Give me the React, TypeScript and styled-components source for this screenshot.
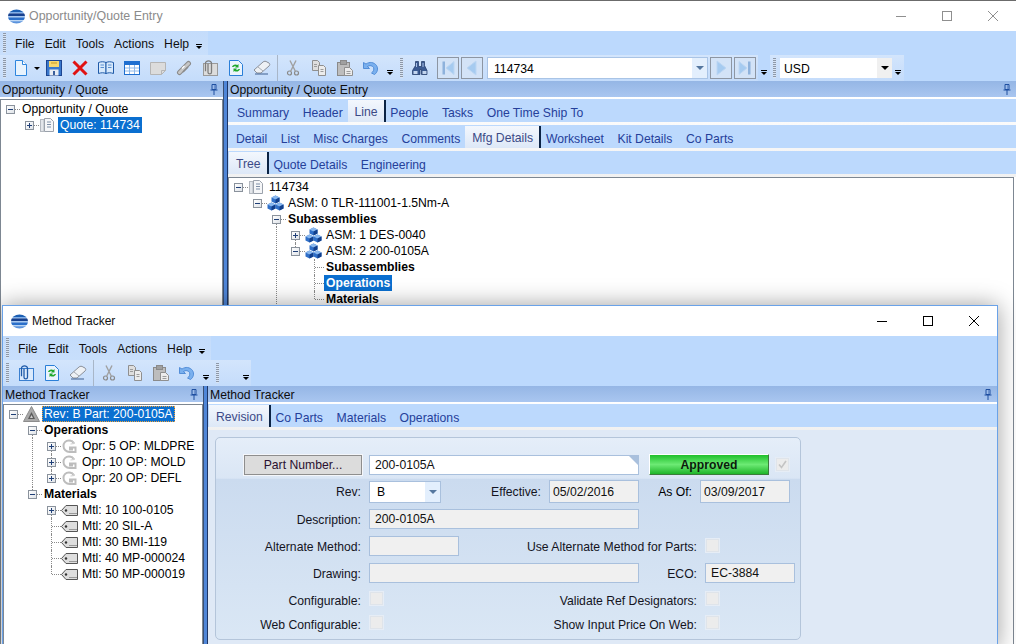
import React from "react";
import styled, { createGlobalStyle } from "styled-components";

const Global = createGlobalStyle`
  html, body {
    margin: 0;
    padding: 0;
    background: #f0f0f0;
  }
  * {
    box-sizing: border-box;
  }
`;

const UI_FONT = `"Liberation Sans", Arial, sans-serif`;

const Desktop = styled.div`
  position: relative;
  width: 1016px;
  height: 644px;
  overflow: hidden;
  font-family: ${UI_FONT};
  font-size: 12.2px;
  color: #000;
`;

const BackWindow = styled.div`
  position: absolute;
  top: 0;
  left: 0;
  width: 1016px;
  height: 644px;
  display: flex;
  flex-direction: column;
  background: #fff;
  border-top: 1px solid #6b6b6b;
`;

const FrontWindow = styled.div`
  position: absolute;
  top: 305px;
  left: 2px;
  width: 996px;
  height: 345px;
  display: flex;
  flex-direction: column;
  background: #fff;
  border: 1px solid #6aa2e8;
  box-shadow: 0 0 22px rgba(0, 0, 0, 0.38);
`;

const TitleBar = styled.div`
  flex: none;
  height: 30px;
  display: flex;
  align-items: center;
  padding-left: 8px;
  background: #fff;
`;

const TitleText = styled.div<{ $active?: boolean }>`
  flex: 1;
  margin-left: 4px;
  font-size: ${(p) => (p.$active ? "12px" : "12.4px")};
  color: ${(p) => (p.$active ? "#111" : "#8b8b8b")};
`;

const WinButton = styled.div`
  width: 46px;
  height: 30px;
  display: flex;
  align-items: center;
  justify-content: center;
`;

const MenuBand = styled.div`
  flex: none;
  height: 24px;
  background: #bcd9fd;
  display: flex;
`;

const MenuStrip = styled.div`
  display: flex;
  align-items: center;
  width: 208px;
  padding-left: 3px;
  background: linear-gradient(180deg, #c4dcfb, #c8dffc);
`;

const Grip = styled.div`
  flex: none;
  width: 3px;
  height: 20px;
  background: repeating-linear-gradient(180deg, #8d98a8 0 1px, #d8e4f4 1px 2px);
`;

const MenuItem = styled.div<{ $first?: boolean }>`
  margin-left: ${(p) => (p.$first ? "9px" : "10px")};
  padding-top: 2px;
  color: #101010;
`;

const Overflow = styled.div<{ $gap?: number }>`
  flex: none;
  align-self: flex-end;
  width: 6px;
  height: 6px;
  margin: 0 0 5px ${(p) => p.$gap ?? 7}px;
  background: linear-gradient(#000, #000) top / 6px 1px no-repeat;
  position: relative;
  &::after {
    content: "";
    position: absolute;
    left: 0;
    top: 2px;
    border: 3px solid transparent;
    border-top-color: #000;
    border-bottom: 0;
  }
`;

const ToolBand = styled.div`
  flex: none;
  height: 26px;
  background: #bcd9fd;
  display: flex;
`;

const ToolStrip = styled.div<{ $width: number; $gap?: number }>`
  flex: none;
  width: ${(p) => p.$width}px;
  margin-left: ${(p) => p.$gap ?? 0}px;
  padding-left: 3px;
  display: flex;
  align-items: center;
  background: linear-gradient(180deg, #d3e5fc, #c4dcfb);
`;

const ToolButton = styled.div<{ $width?: number; $left?: number }>`
  flex: none;
  width: ${(p) => p.$width ?? 26}px;
  height: 22px;
  margin-left: ${(p) => p.$left ?? 0}px;
  display: flex;
  align-items: center;
  justify-content: center;
`;

const SplitCaret = styled.div`
  flex: none;
  width: 9px;
  display: flex;
  justify-content: center;
  &::after {
    content: "";
    border: 3px solid transparent;
    border-top-color: #000;
    border-bottom: 0;
  }
`;

const ToolSep = styled.div`
  flex: none;
  width: 1px;
  height: 26px;
  margin: 0 2px;
  background: #a8b6c8;
`;

const NavButton = styled.div<{ $left?: number }>`
  flex: none;
  width: 22px;
  height: 22px;
  margin-left: ${(p) => p.$left ?? 2}px;
  border: 1px solid #8d96a3;
  background: #d3e3f7;
  display: flex;
  align-items: center;
  justify-content: center;
`;

const ToolCombo = styled.div<{ $width: number; $left: number; $plain?: boolean }>`
  flex: none;
  width: ${(p) => p.$width}px;
  height: ${(p) => (p.$plain ? 20 : 22)}px;
  margin-left: ${(p) => p.$left}px;
  display: flex;
  align-items: center;
  background: #fff;
  border: ${(p) => (p.$plain ? "0" : "1px solid #a9c4e6")};
  padding-left: ${(p) => (p.$plain ? 4 : 6)}px;
`;

const ComboText = styled.div`
  flex: 1;
  padding-top: 1px;
`;

const ComboDrop = styled.div<{ $plain?: boolean; $width?: number }>`
  flex: none;
  width: ${(p) => p.$width ?? 15}px;
  height: 100%;
  background: ${(p) => (p.$plain ? "#f0f0f0" : "#e3effd")};
  display: flex;
  align-items: center;
  justify-content: center;
  &::after {
    content: "";
    border: 4px solid transparent;
    border-top-color: ${(p) => (p.$plain ? "#000" : "#55779f")};
    border-bottom: 0;
  }
`;

const DockBody = styled.div`
  flex: 1;
  min-height: 0;
  display: flex;
`;

const Dock = styled.div<{ $width?: number }>`
  ${(p) => (p.$width ? `flex: none; width: ${p.$width}px;` : "flex: 1; min-width: 0;")}
  display: flex;
  flex-direction: column;
`;

const Splitter = styled.div`
  flex: none;
  width: 5px;
  background: #4f86d8;
  border-left: 1px solid #3a4f72;
  border-right: 1px solid #1d3566;
`;

const DockHeader = styled.div`
  flex: none;
  height: 16px;
  display: flex;
  align-items: center;
  justify-content: space-between;
  padding: 1px 5px 0 2px;
  background: linear-gradient(180deg, #95b6e5, #a9c6f0);
  color: #0d0d0d;
`;

const TreePane = styled.div<{ $right?: number; $flush?: boolean }>`
  flex: 1;
  min-height: 0;
  overflow: hidden;
  margin: ${(p) => (p.$flush ? 0 : 2)}px ${(p) => p.$right ?? 0}px 0 0;
  padding-top: 1px;
  background: #fff;
  border: 1px solid #7d8792;
  border-bottom: 0;
`;

const TabStack = styled.div`
  flex: none;
  display: flex;
  flex-direction: column;
  gap: 3px;
  padding-top: 2px;
  padding-bottom: 3px;
  background: linear-gradient(#fff, #f1f1f1);
`;

const TabStrip = styled.div<{ $pad?: number }>`
  height: 23px;
  display: flex;
  padding-left: ${(p) => p.$pad ?? 3}px;
  background: #bcd9fd;
`;

const Tab = styled.div<{ $active?: boolean }>`
  display: flex;
  align-items: center;
  white-space: nowrap;
  ${(p) =>
    p.$active
      ? `
    padding: 2px 6px 1px 7px;
    margin: 1px -2px 0 -2px;
    background: linear-gradient(180deg, #f3f7fd, #dde8f7);
    border-right: 2px solid #0b2344;
    color: #3c4a86;
  `
      : `
    padding: 5px 6.8px 0;
    color: #25409a;
  `}
`;

const FormArea = styled.div`
  flex: 1;
  min-height: 0;
  padding: 7px 0 0 7px;
  background: #dfe9f6;
`;

const GroupPanel = styled.div`
  width: 586px;
  height: 203px;
  padding-top: 13px;
  border: 1px solid #b4c5da;
  border-radius: 5px;
  background: linear-gradient(180deg, #e5eef9 0, #dae6f5 20%, #cbdbef 20.5%, #dae7f5 100%);
  display: grid;
  grid-template-columns: 145px 8px 90px 90px 90px 10px 48px 8px 90px;
  grid-template-rows: 27px 27px 27px 27px 27px 25px 22px;
  align-items: center;
`;

const FieldLabel = styled.div<{ $col: string; $pad?: number; $drop?: number }>`
  grid-column: ${(p) => p.$col};
  padding-top: ${(p) => p.$drop ?? 1}px;
  padding-right: ${(p) => p.$pad ?? 0}px;
  text-align: right;
  white-space: nowrap;
  color: #14141e;
`;

const Field = styled.div<{ $col: string; $editable?: boolean }>`
  grid-column: ${(p) => p.$col};
  position: relative;
  height: 20px;
  display: flex;
  align-items: center;
  padding-left: 5px;
  border: 1px solid #a9c0dd;
  background: ${(p) => (p.$editable ? "#fff" : "#f0f0f0")};
  color: #111;
`;

const Notch = styled.div`
  position: absolute;
  top: 0;
  right: 0;
  border-style: solid;
  border-width: 0 9px 9px 0;
  border-color: transparent #a9c0dd transparent transparent;
`;

const RevCombo = styled.div`
  grid-column: 3;
  width: 72px;
  height: 22px;
  display: flex;
  align-items: center;
  padding-left: 7px;
  border: 1px solid #a9c0dd;
  background: #fff;
`;

const PartButton = styled.div`
  grid-column: 1;
  margin-left: 28px;
  width: 118px;
  height: 20px;
  display: flex;
  align-items: center;
  justify-content: center;
  background: #dcdcdc;
  border: 1px solid #8e8e8e;
  outline: 1px solid #f4f6fa;
  color: #2a1030;
`;

const StatusGroup = styled.div`
  grid-column: 7 / 10;
  display: flex;
  align-items: center;
`;

const StatusButton = styled.div`
  flex: none;
  width: 120px;
  height: 21px;
  display: flex;
  align-items: center;
  justify-content: center;
  font-weight: 700;
  color: #0c1a0c;
  background: linear-gradient(180deg, #1fc02b, #6cea74 50%, #1fb52a);
  border-top: 1px solid #fff;
  border-left: 1px solid #fff;
  border-right: 1px solid #3c7a3c;
  border-bottom: 1px solid #3c7a3c;
`;

const AsOfPair = styled.div`
  grid-column: 7 / 10;
  display: flex;
  align-items: center;
  justify-content: flex-end;
  gap: 8px;
  margin-right: 5px;
`;

const DateField = styled.div<{ $col?: string }>`
  ${(p) => (p.$col ? `grid-column: ${p.$col};` : "")}
  width: 90px;
  height: 23px;
  display: flex;
  align-items: center;
  padding: 1px 0 0 3px;
  border: 1px solid #a9c0dd;
  background: #f0f0f0;
  color: #111;
`;

const CheckBox = styled.div<{ $col?: string; $left?: number }>`
  ${(p) => (p.$col ? `grid-column: ${p.$col};` : "")}
  flex: none;
  width: 13px;
  height: 13px;
  margin-left: ${(p) => p.$left ?? 1}px;
  background: #ececec;
  border: 1px solid #dfe4ea;
  outline: 1px solid #e6edf6;
  display: flex;
  align-items: center;
  justify-content: center;
`;

/* tree */
const Row = styled.div`
  height: 16px;
  display: flex;
  align-items: center;
  white-space: nowrap;
`;

const Guide = styled.div<{ $line?: boolean }>`
  flex: none;
  width: 19px;
  height: 16px;
  background: ${(p) =>
    p.$line
      ? "repeating-linear-gradient(180deg, #8a8a8a 0 1px, transparent 1px 2px) 9px 0 / 1px 16px no-repeat"
      : "none"};
`;

const Slot = styled.div<{ $up?: boolean; $down?: boolean }>`
  flex: none;
  position: relative;
  width: 19px;
  height: 16px;
  display: flex;
  align-items: center;
  justify-content: center;
  &::before {
    content: "";
    position: absolute;
    left: 9px;
    top: ${(p) => (p.$up ? "0" : "8px")};
    bottom: ${(p) => (p.$down ? "0" : "8px")};
    border-left: 1px dotted #8a8a8a;
  }
  &::after {
    content: "";
    position: absolute;
    left: 10px;
    right: 0;
    top: 8px;
    border-top: 1px dotted #8a8a8a;
  }
`;

const Expander = styled.div`
  position: relative;
  z-index: 1;
  width: 9px;
  height: 9px;
  background: linear-gradient(135deg, #fff, #dfe3e8);
  border: 1px solid #8a929c;
  display: flex;
  align-items: center;
  justify-content: center;
  svg {
    display: block;
  }
`;

const NodeIcon = styled.div`
  flex: none;
  width: 17px;
  height: 16px;
  display: flex;
  align-items: center;
  justify-content: center;
`;

const NodeLabel = styled.div<{ $bold?: boolean; $selected?: boolean; $focus?: boolean; $offset?: number }>`
  height: 16px;
  line-height: 17px;
  margin-left: ${(p) => p.$offset ?? 0}px;
  padding: 0 2px;
  font-weight: ${(p) => (p.$bold ? 700 : 400)};
  background: ${(p) => (p.$selected ? "#0a6fd0" : "transparent")};
  color: ${(p) => (p.$selected ? "#fff" : "#000")};
  outline: ${(p) => (p.$focus ? "1px dotted #f2a33a" : "none")};
  outline-offset: -1px;
`;

/* ---------- drawings ---------- */
const Svg = ({ w = 16, h = 16, children }: { w?: number; h?: number; children: React.ReactNode }) => (
  <svg width={w} height={h} viewBox={`0 0 ${w} ${h}`} fill="none">
    {children}
  </svg>
);

const AppLogo = () => (
  <svg width="17" height="15" viewBox="0 0 17 15">
    <defs>
      <clipPath id="logo">
        <ellipse cx="8.5" cy="7.5" rx="8.5" ry="7" />
      </clipPath>
    </defs>
    <g clipPath="url(#logo)">
      <rect width="17" height="3" fill="#1c5fb4" />
      <rect y="3" width="17" height="1.4" fill="#7fb0ea" />
      <rect y="4.4" width="17" height="2.6" fill="#16408e" />
      <rect y="7" width="17" height="1.4" fill="#a9c9ef" />
      <rect y="8.4" width="17" height="2.6" fill="#2a6fca" />
      <rect y="11" width="17" height="1.2" fill="#bcd6f3" />
      <rect y="12.2" width="17" height="3" fill="#5a93dd" />
    </g>
  </svg>
);

const MinGlyph = ({ color }: { color: string }) => (
  <Svg w={10} h={10}>
    <path d="M0 5.5h10" stroke={color} />
  </Svg>
);
const MaxGlyph = ({ color }: { color: string }) => (
  <Svg w={10} h={10}>
    <rect x=".5" y=".5" width="9" height="9" stroke={color} />
  </Svg>
);
const CloseGlyph = ({ color }: { color: string }) => (
  <Svg w={10} h={10}>
    <path d="M0 0l10 10M10 0L0 10" stroke={color} />
  </Svg>
);

const NewDoc = () => (
  <Svg>
    <path d="M2.5 .5h7l4 4v11h-11z" fill="#e8f3fd" stroke="#2e86de" />
    <path d="M9.5 .5v4h4" fill="#fff" stroke="#2e86de" />
  </Svg>
);
const Save = () => (
  <Svg>
    <rect x=".5" y=".5" width="15" height="15" fill="#3a78cc" stroke="#1d4590" />
    <rect x="3" y="1" width="10" height="6" fill="#f8d86e" />
    <path d="M5 3h6" stroke="#c79a26" />
    <rect x="3.5" y="9.5" width="9" height="6" fill="#e8edf4" />
    <rect x="7" y="11" width="2" height="4" fill="#3a5f9c" />
  </Svg>
);
const RedX = () => (
  <Svg>
    <path d="M1.5 1.5l13 13M14.5 1.5l-13 13" stroke="#e01212" strokeWidth="3" />
  </Svg>
);
const Book = () => (
  <Svg>
    <path d="M.5 2.5c3-1 5-1 7.500 0v11c-2.500-1-4.500-1-7.500 0z" fill="#d7e9fb" stroke="#1f5aa8" />
    <path d="M15.500 2.500c-3-1-5-1-7.500 0v11c2.500-1 4.500-1 7.500 0z" fill="#d7e9fb" stroke="#1f5aa8" />
    <path d="M2.500 5h3.500M2.500 7.500h3.500M10 5h3.500M10 7.500h3.500" stroke="#5a8fd0" />
  </Svg>
);
const Calendar = () => (
  <Svg>
    <rect x=".5" y="1.500" width="15" height="13" fill="#fff" stroke="#1f6fd0" />
    <rect x="1" y="2" width="14" height="3" fill="#1f6fd0" />
    <path d="M1 8h14M1 11h14M5.500 5v9M10.500 5v9" stroke="#8db8ea" />
  </Svg>
);
const Note = () => (
  <Svg>
    <path d="M.5 2.500h15v8l-4 4h-11z" fill="#dcdcdc" stroke="#b5b5b5" />
    <path d="M15.500 10.500h-4v4" stroke="#b5b5b5" />
  </Svg>
);
const Phone = () => (
  <Svg>
    <path d="M3.500 12.500L12.500 3.500" stroke="#8a8a8a" strokeWidth="5" strokeLinecap="round" />
    <path d="M3.500 12.500L12.500 3.500" stroke="#c6c6c6" strokeWidth="3" strokeLinecap="round" />
    <path d="M6 8.500L8.500 6" stroke="#fff" strokeWidth="1.200" />
    <path d="M7 12l5-5" stroke="#8a8a8a" strokeWidth="1.600" />
  </Svg>
);
const ClipDoc = ({ blue }: { blue?: boolean }) => (
  <Svg>
    <rect x="1.500" y="3.500" width="14" height="12" fill={blue ? "#dbeafc" : "#dcdcdc"} stroke={blue ? "#3a7fd0" : "#9a9a9a"} />
    <path
      d="M4.500 3.500v8.500c0 2.200 3.500 2.200 3.500 0v-9c0-3-6-3-6 0v8"
      stroke={blue ? "#1f5aa8" : "#7d7d7d"}
      strokeWidth="1.300"
      transform="translate(1.500 .2)"
    />
  </Svg>
);
const RefreshDoc = () => (
  <Svg>
    <path d="M1.500 .5h9l4 4v11h-13z" fill="#eaf3fd" stroke="#2a7fd8" />
    <path d="M4 7c.5-2 3-3.500 5.500-2l1-1v3.500h-3.500l1-1c-1-.500-2-.500-2.500.500z" fill="#1fa82c" />
    <path d="M12 9c-.5 2-3 3.500-5.500 2l-1 1V8.500H9l-1 1c1 .5 2 .5 2.500-.5z" fill="#1fa82c" />
  </Svg>
);
const Eraser = () => (
  <svg width="18" height="16" viewBox="0 0 18 16" fill="none">
    <path d="M1 10l9-8c1-1 3-1 4 0l2 1c1 1 1 2 0 3l-8 7H4z" fill="#eef1f5" stroke="#8a8f98" />
    <path d="M2 14h13" stroke="#3f5f8f" />
    <path d="M5 7l5 4" stroke="#a5aab2" />
  </svg>
);
const Scissors = () => (
  <Svg>
    <circle cx="4.500" cy="13" r="2" stroke="#8a8a8a" strokeWidth="1.200" />
    <circle cx="11.500" cy="13" r="2" stroke="#8a8a8a" strokeWidth="1.200" />
    <path d="M5.500 11.500L11 .5M10.500 11.500L5 .5" stroke="#a0a0a0" strokeWidth="1.400" />
  </Svg>
);
const Copy = () => (
  <Svg>
    <path d="M1.500 .5h5l2 2v8h-7z" fill="#dedede" stroke="#8f8f8f" />
    <path d="M7.500 5.500h5l2 2v8h-7z" fill="#ececec" stroke="#8f8f8f" />
    <path d="M9.500 9.500h3M9.500 11.500h3M3 4.500h3M3 6.500h3" stroke="#9c9c9c" />
  </Svg>
);
const Paste = () => (
  <Svg>
    <rect x=".5" y="2.500" width="12" height="13" fill="#bdbdbd" stroke="#8a8a8a" />
    <rect x="3.500" y=".5" width="6" height="4" fill="#a0a0a0" stroke="#8a8a8a" />
    <path d="M7.500 7.500h5l3 3v5h-8z" fill="#ececec" stroke="#8f8f8f" />
    <path d="M9.500 11.500h4M9.500 13.500h4" stroke="#9c9c9c" />
  </Svg>
);
const Undo = () => (
  <Svg>
    <path d="M.5 2.500v6h6L4.500 6.500c2-1.500 5-1 6 1 .8 2 0 4-2 5.500l3 1.500c3-2 4-6 2-9-2.500-3.500-7-4-10.500-1.500z" fill="#7ab0ee" stroke="#3f7fd0" strokeWidth=".8" />
  </Svg>
);
const Binoculars = () => (
  <Svg>
    <path d="M3.500 1.500h3v5h3v-5h3v4l2.500 5v4h-5.500v-5h-1.500v5H.5v-4l3-5z" fill="#3a5a92" stroke="#1d3563" strokeWidth=".7" />
    <path d="M4.500 3v4M11 3v4" stroke="#a9c0e6" />
    <rect x="1.500" y="11" width="4" height="3" fill="#c3d5ee" />
    <rect x="10.500" y="11" width="4" height="3" fill="#c3d5ee" />
  </Svg>
);
const NavArrow = ({ dir, bar }: { dir: "left" | "right"; bar?: boolean }) => (
  <Svg>
    <g transform={dir === "left" ? "matrix(-1 0 0 1 16 0)" : undefined}>
      <path d={bar ? "M2 1.500v13l8-6.500z" : "M4 1l9 7-9 7z"} fill="#a6cbf0" stroke="#bcd6f3" />
      {bar && <rect x="11" y="1.500" width="2.500" height="13" fill="#8eb2dc" />}
    </g>
  </Svg>
);

const QuoteNode = () => (
  <Svg w={17} h={16}>
    <rect x="1.500" y="2.500" width="3.500" height="12" fill="#e2e5ea" stroke="#b3b8bf" />
    <path d="M5.500 1.500h6l3 3v10h-9z" fill="#f5f6f8" stroke="#9ba2ac" />
    <path d="M8 5h4M8 7.500h4M8 10h4" stroke="#7d8ea6" />
  </Svg>
);
const Cube = ({ x, y }: { x: number; y: number }) => (
  <g transform={`translate(${x} ${y})`}>
    <path d="M4 0l4 2v4L4 8 0 6V2z" fill="#2f6fc8" />
    <path d="M4 0l4 2-4 2-4-2z" fill="#8ab8ee" />
    <path d="M4 4l4-2v4L4 8z" fill="#123f8c" />
  </g>
);
const AsmNode = () => (
  <Svg w={17} h={16}>
    <Cube x={4.500} y={0.500} />
    <Cube x={0.500} y={7.500} />
    <Cube x={8.500} y={7.500} />
  </Svg>
);
const RevNode = () => (
  <Svg w={17} h={16}>
    <path d="M8.500 .5l8 15h-16z" fill="#a9a9a9" stroke="#8c8c8c" />
    <path d="M8.500 6l3.500 7h-7z" fill="#5c5c5c" />
    <path d="M8.500 9l1.500 3h-3z" fill="#cfcfcf" />
  </Svg>
);
const OprNode = () => (
  <Svg w={17} h={16}>
    <path d="M13 5.500c-1-2-3-3-5-3-3.500 0-5.500 2.800-5.500 5.500 0 3.500 2.800 6 6 6h6V9.500H9v2h3" stroke="#bdbdbd" strokeWidth="2" />
    <path d="M11 2l2.500 3.500L9.500 6" stroke="#d0d0d0" strokeWidth="1" />
  </Svg>
);
const MtlNode = () => (
  <Svg w={17} h={16}>
    <path d="M5 3.500h11.500v10H5L.5 8.500z" fill="#dedede" stroke="#555" />
    <circle cx="5" cy="8.500" r="1.200" fill="#333" />
    <path d="M8 11.500h8" stroke="#9a9a9a" />
  </Svg>
);

const Pin = () => (
  <svg width="8" height="11" viewBox="0 0 8 11" fill="none">
    <path d="M2 .5h4v5H2zM.5 6h7M4 6v5" stroke="#1f4fa0" />
    <path d="M4.500 1v4" stroke="#6f93cf" />
  </svg>
);

const MinusPlus = ({ plus }: { plus?: boolean }) => (
  <svg width="7" height="7" viewBox="0 0 7 7">
    <path d="M1 3.500h5" stroke="#1f3f77" />
    {plus && <path d="M3.500 1v5" stroke="#1f3f77" />}
  </svg>
);

const Tick = () => (
  <svg width="11" height="11" viewBox="0 0 11 11" fill="none">
    <path d="M2 5.500l2.500 3L9 2" stroke="#c4c4c4" strokeWidth="1.600" />
  </svg>
);

/* ---------- shared pieces ---------- */
const WindowTitle = ({ title, active }: { title: string; active?: boolean }) => {
  const color = active ? "#000" : "#8f8f8f";
  return (
    <TitleBar>
      <AppLogo />
      <TitleText $active={active}>{title}</TitleText>
      <WinButton>
        <MinGlyph color={color} />
      </WinButton>
      <WinButton>
        <MaxGlyph color={color} />
      </WinButton>
      <WinButton>
        <CloseGlyph color={color} />
      </WinButton>
    </TitleBar>
  );
};

const Menus = () => (
  <MenuBand>
    <MenuStrip>
      <Grip />
      <MenuItem $first>File</MenuItem>
      <MenuItem>Edit</MenuItem>
      <MenuItem>Tools</MenuItem>
      <MenuItem>Actions</MenuItem>
      <MenuItem>Help</MenuItem>
      <Overflow />
    </MenuStrip>
  </MenuBand>
);

type NodeProps = {
  guides?: boolean[];
  expander?: "plus" | "minus";
  up?: boolean;
  down?: boolean;
  icon?: React.ReactNode;
  bold?: boolean;
  selected?: boolean;
  focus?: boolean;
  label: string;
};

const TreeNode = ({ guides = [], expander, up, down, icon, bold, selected, focus, label }: NodeProps) => (
  <Row>
    {guides.map((line, i) => (
      <Guide key={i} $line={line} />
    ))}
    <Slot $up={up} $down={down}>
      {expander && (
        <Expander>
          <MinusPlus plus={expander === "plus"} />
        </Expander>
      )}
    </Slot>
    {icon && <NodeIcon>{icon}</NodeIcon>}
    <NodeLabel $bold={bold} $selected={selected} $focus={focus} $offset={icon ? 2 : 0}>
      {label}
    </NodeLabel>
  </Row>
);

const EDIT_TOOLS = (
  <>
    <ToolSep />
    <ToolButton>
      <Scissors />
    </ToolButton>
    <ToolButton>
      <Copy />
    </ToolButton>
    <ToolButton>
      <Paste />
    </ToolButton>
    <ToolButton>
      <Undo />
    </ToolButton>
  </>
);

export default function App() {
  return (
    <Desktop>
      <Global />
      <BackWindow>
        <WindowTitle title="Opportunity/Quote Entry" />
        <Menus />
        <ToolBand>
          <ToolStrip $width={397}>
            <Grip />
            <ToolButton $width={22} $left={4}>
              <NewDoc />
            </ToolButton>
            <SplitCaret />
            <ToolButton>
              <Save />
            </ToolButton>
            <ToolButton>
              <RedX />
            </ToolButton>
            <ToolButton>
              <Book />
            </ToolButton>
            <ToolButton>
              <Calendar />
            </ToolButton>
            <ToolButton>
              <Note />
            </ToolButton>
            <ToolButton>
              <Phone />
            </ToolButton>
            <ToolButton>
              <ClipDoc />
            </ToolButton>
            <ToolButton>
              <RefreshDoc />
            </ToolButton>
            <ToolButton>
              <Eraser />
            </ToolButton>
            {EDIT_TOOLS}
            <Overflow $gap={3} />
          </ToolStrip>
          <ToolStrip $width={361}>
            <Grip />
            <ToolButton $left={4}>
              <Binoculars />
            </ToolButton>
            <NavButton $left={4}>
              <NavArrow dir="left" bar />
            </NavButton>
            <NavButton>
              <NavArrow dir="left" />
            </NavButton>
            <ToolCombo $width={221} $left={4}>
              <ComboText>114734</ComboText>
              <ComboDrop />
            </ToolCombo>
            <NavButton>
              <NavArrow dir="right" />
            </NavButton>
            <NavButton>
              <NavArrow dir="right" bar />
            </NavButton>
          </ToolStrip>
          <Overflow $gap={3} />
          <ToolStrip $width={134} $gap={3}>
            <Grip />
            <ToolCombo $width={112} $left={4} $plain>
              <ComboText>USD</ComboText>
              <ComboDrop $plain />
            </ToolCombo>
            <Overflow $gap={3} />
          </ToolStrip>
        </ToolBand>
        <DockBody>
          <Dock $width={223}>
            <DockHeader>
              Opportunity / Quote
              <Pin />
            </DockHeader>
            <TreePane>
              <TreeNode expander="minus" label="Opportunity / Quote" />
              <TreeNode guides={[false]} expander="plus" icon={<QuoteNode />} selected label="Quote: 114734" />
            </TreePane>
          </Dock>
          <Splitter />
          <Dock>
            <DockHeader>
              Opportunity / Quote Entry
              <Pin />
            </DockHeader>
            <TabStack>
              <TabStrip $pad={2.2}>
                <Tab>Summary</Tab>
                <Tab>Header</Tab>
                <Tab $active>Line</Tab>
                <Tab>People</Tab>
                <Tab>Tasks</Tab>
                <Tab>One Time Ship To</Tab>
              </TabStrip>
              <TabStrip $pad={1.2}>
                <Tab>Detail</Tab>
                <Tab>List</Tab>
                <Tab>Misc Charges</Tab>
                <Tab>Comments</Tab>
                <Tab $active>Mfg Details</Tab>
                <Tab>Worksheet</Tab>
                <Tab>Kit Details</Tab>
                <Tab>Co Parts</Tab>
              </TabStrip>
              <TabStrip>
                <Tab $active>Tree</Tab>
                <Tab>Quote Details</Tab>
                <Tab>Engineering</Tab>
              </TabStrip>
            </TabStack>
            <TreePane $right={2} $flush>
              <TreeNode expander="minus" icon={<QuoteNode />} label="114734" />
              <TreeNode guides={[false]} expander="minus" icon={<AsmNode />} label="ASM: 0 TLR-111001-1.5Nm-A" />
              <TreeNode guides={[false, false]} expander="minus" down bold label="Subassemblies" />
              <TreeNode guides={[false, false, true]} expander="plus" down icon={<AsmNode />} label="ASM: 1 DES-0040" />
              <TreeNode guides={[false, false, true]} expander="minus" up icon={<AsmNode />} label="ASM: 2 200-0105A" />
              <TreeNode guides={[false, false, true, false]} up down bold label="Subassemblies" />
              <TreeNode guides={[false, false, true, false]} up down bold selected label="Operations" />
              <TreeNode guides={[false, false, true, false]} up bold label="Materials" />
            </TreePane>
          </Dock>
        </DockBody>
      </BackWindow>

      <FrontWindow>
        <WindowTitle title="Method Tracker" active />
        <Menus />
        <ToolBand>
          <ToolStrip $width={210}>
            <Grip />
            <ToolButton $left={4}>
              <ClipDoc blue />
            </ToolButton>
            <ToolButton>
              <RefreshDoc />
            </ToolButton>
            <ToolButton>
              <Eraser />
            </ToolButton>
            {EDIT_TOOLS}
            <Overflow $gap={3} />
          </ToolStrip>
          <ToolStrip $width={38}>
            <Grip />
            <Overflow $gap={24} />
          </ToolStrip>
        </ToolBand>
        <DockBody>
          <Dock $width={200}>
            <DockHeader>
              Method Tracker
              <Pin />
            </DockHeader>
            <TreePane>
              <TreeNode expander="minus" icon={<RevNode />} selected focus label="Rev: B Part: 200-0105A" />
              <TreeNode guides={[false]} expander="minus" down bold label="Operations" />
              <TreeNode guides={[false, true]} expander="plus" down icon={<OprNode />} label="Opr: 5 OP: MLDPRE" />
              <TreeNode guides={[false, true]} expander="plus" up down icon={<OprNode />} label="Opr: 10 OP: MOLD" />
              <TreeNode guides={[false, true]} expander="plus" up icon={<OprNode />} label="Opr: 20 OP: DEFL" />
              <TreeNode guides={[false]} expander="minus" up bold label="Materials" />
              <TreeNode guides={[false, false]} expander="plus" down icon={<MtlNode />} label="Mtl: 10 100-0105" />
              <TreeNode guides={[false, false]} up down icon={<MtlNode />} label="Mtl: 20 SIL-A" />
              <TreeNode guides={[false, false]} up down icon={<MtlNode />} label="Mtl: 30 BMI-119" />
              <TreeNode guides={[false, false]} up down icon={<MtlNode />} label="Mtl: 40 MP-000024" />
              <TreeNode guides={[false, false]} up icon={<MtlNode />} label="Mtl: 50 MP-000019" />
            </TreePane>
          </Dock>
          <Splitter />
          <Dock>
            <DockHeader>
              Method Tracker
              <Pin />
            </DockHeader>
            <TabStack>
              <TabStrip>
                <Tab $active>Revision</Tab>
                <Tab>Co Parts</Tab>
                <Tab>Materials</Tab>
                <Tab>Operations</Tab>
              </TabStrip>
            </TabStack>
            <FormArea>
              <GroupPanel>
                <PartButton>Part Number...</PartButton>
                <Field $col="3 / 6" $editable>
                  200-0105A
                  <Notch />
                </Field>
                <StatusGroup>
                  <StatusButton>Approved</StatusButton>
                  <CheckBox $left={7}>
                    <Tick />
                  </CheckBox>
                </StatusGroup>

                <FieldLabel $col="1">Rev:</FieldLabel>
                <RevCombo>
                  <ComboText>B</ComboText>
                  <ComboDrop />
                </RevCombo>
                <FieldLabel $col="4" $pad={8}>
                  Effective:
                </FieldLabel>
                <DateField $col="5">05/02/2016</DateField>
                <AsOfPair>
                  As Of:
                  <DateField>03/09/2017</DateField>
                </AsOfPair>

                <FieldLabel $col="1" $drop={3}>
                  Description:
                </FieldLabel>
                <Field $col="3 / 6">200-0105A</Field>

                <FieldLabel $col="1" $drop={3}>
                  Alternate Method:
                </FieldLabel>
                <Field $col="3" />
                <FieldLabel $col="4 / 8" $drop={3}>
                  Use Alternate Method for Parts:
                </FieldLabel>
                <CheckBox $col="9" />

                <FieldLabel $col="1" $drop={3}>
                  Drawing:
                </FieldLabel>
                <Field $col="3 / 6" />
                <FieldLabel $col="7" $drop={3}>
                  ECO:
                </FieldLabel>
                <Field $col="9">EC-3884</Field>

                <FieldLabel $col="1" $drop={5}>
                  Configurable:
                </FieldLabel>
                <CheckBox $col="3" />
                <FieldLabel $col="4 / 8" $drop={5}>
                  Validate Ref Designators:
                </FieldLabel>
                <CheckBox $col="9" />

                <FieldLabel $col="1" $drop={5}>
                  Web Configurable:
                </FieldLabel>
                <CheckBox $col="3" />
                <FieldLabel $col="4 / 8" $drop={5}>
                  Show Input Price On Web:
                </FieldLabel>
                <CheckBox $col="9" />
              </GroupPanel>
            </FormArea>
          </Dock>
        </DockBody>
      </FrontWindow>
    </Desktop>
  );
}
